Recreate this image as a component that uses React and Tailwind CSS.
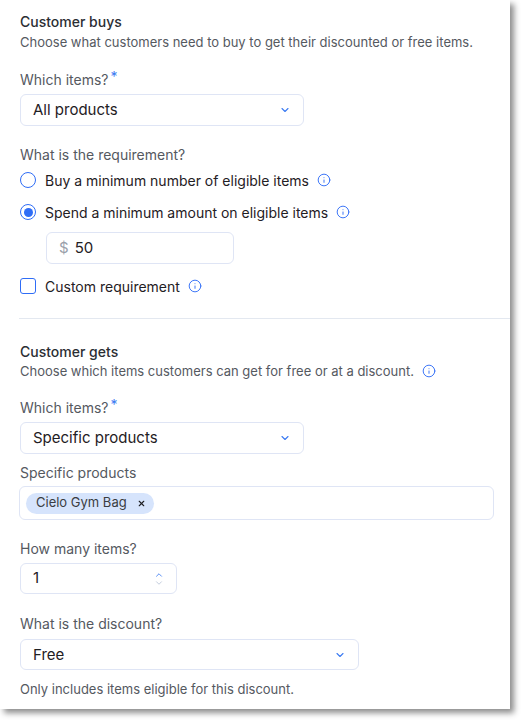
import { ChevronDown, ChevronUp, Info, X } from 'lucide-react';

function Select({ value, width, h = 'h-[32px]' }) {
  return (
    <div className={`flex items-center justify-between rounded-md border border-[#dfe5f5] bg-white pl-3 pr-3 ${h} ${width}`}>
      <span className="text-[15px] leading-[18px] text-[#1f2024]">{value}</span>
      <ChevronDown size={12} strokeWidth={2.2} className="text-[#3b7bf2]" />
    </div>
  );
}

function Label({ children, star }) {
  return (
    <div className="text-[14px] leading-[18px] text-[#55595f]">
      {children}
      {star && <span className="ml-0.5 align-top text-[14px] leading-[12px] text-[#3b7bf2]">*</span>}
    </div>
  );
}

function InfoIcon() {
  return <Info size={14} strokeWidth={1.6} className="text-[#2f6df6]" />;
}

export default function App() {
  return (
    <div className="h-[724px] w-[529px] bg-white" style={{ fontFamily: 'Inter, "Noto Sans", sans-serif' }}>
      <div className="h-[709px] w-[510px] bg-white pt-[13px] shadow-[4px_4px_6px_rgba(0,0,0,0.45)]">
        <div className="px-5">
          <div className="text-[14px] font-medium leading-[18px] text-[#2b2e33]">Customer buys</div>
          <div className="mt-[2px] text-[13px] leading-[18px] text-[#55595f]">
            Choose what customers need to buy to get their discounted or free items.
          </div>

          <div className="mt-[20px]"><Label star>Which items?</Label></div>
          <div className="mt-[5px]"><Select value="All products" width="w-[284px]" /></div>

          <div className="mt-[20px]"><Label>What is the requirement?</Label></div>
          <div className="mt-[7px] flex h-[18px] items-center">
            <span className="mr-[9px] h-[16px] w-[16px] rounded-full border-[1.5px] border-[#2f6df6]" />
            <span className="mr-2 text-[14px] text-[#1f2024]">Buy a minimum number of eligible items</span>
            <InfoIcon />
          </div>
          <div className="mt-[14px] flex h-[18px] items-center">
            <span className="mr-[9px] flex h-[16px] w-[16px] items-center justify-center rounded-full border-[1.5px] border-[#2f6df6]">
              <span className="h-[9px] w-[9px] rounded-full bg-[#2f6df6]" />
            </span>
            <span className="mr-2 text-[14px] text-[#1f2024]">Spend a minimum amount on eligible items</span>
            <InfoIcon />
          </div>
          <div className="ml-[26px] mt-[11px] flex h-[32px] w-[188px] items-center gap-1.5 rounded-md border border-[#dfe5f5] pl-3">
            <span className="text-[15px] text-[#9aa0aa]">$</span>
            <span className="text-[15px] text-[#1f2024]">50</span>
          </div>
          <div className="mt-[13px] flex h-[18px] items-center">
            <span className="mr-[9px] h-[16px] w-[16px] rounded-[3px] border-[1.5px] border-[#2f6df6]" />
            <span className="mr-2 text-[14px] text-[#1f2024]">Custom requirement</span>
            <InfoIcon />
          </div>
        </div>

        <div className="ml-[19px] mt-[23px] border-t border-[#e3e8f0]" />

        <div className="px-5">
          <div className="mt-[24px] text-[14px] font-medium leading-[18px] text-[#2b2e33]">Customer gets</div>
          <div className="mt-[1px] flex items-center gap-2 text-[13px] leading-[18px] text-[#55595f]">
            Choose which items customers can get for free or at a discount.
            <InfoIcon />
          </div>

          <div className="mt-[19px]"><Label star>Which items?</Label></div>
          <div className="mt-[5px]"><Select value="Specific products" width="w-[284px]" /></div>

          <div className="mt-[10px]"><Label>Specific products</Label></div>
          <div className="-ml-px mt-[4px] flex h-[34px] w-[475px] items-center rounded-md border border-[#dfe5f5] pl-[6px]">
            <span className="flex h-[21px] items-center gap-2.5 rounded-full bg-[#d6e4fc] pl-[10px] pr-[8px] text-[13px] text-[#3a3d42]">
              Cielo Gym Bag
              <X size={9} strokeWidth={3} className="text-[#1f2024]" />
            </span>
          </div>

          <div className="mt-[20px]"><Label>How many items?</Label></div>
          <div className="mt-[5px] flex h-[31px] w-[157px] items-center justify-between rounded-md border border-[#dfe5f5] pl-3 pr-3">
            <span className="text-[15px] text-[#1f2024]">1</span>
            <span className="flex flex-col items-center -space-y-0.5">
              <ChevronUp size={10} strokeWidth={2} className="text-[#3b7bf2]" />
              <ChevronDown size={10} strokeWidth={2} className="text-[#b8c3d6]" />
            </span>
          </div>

          <div className="mt-[21px]"><Label>What is the discount?</Label></div>
          <div className="mt-[6px]"><Select value="Free" width="w-[339px]" h="h-[31px]" /></div>
          <div className="mt-[10px] text-[13px] leading-[18px] text-[#55595f]">Only includes items eligible for this discount.</div>
        </div>
      </div>
    </div>
  );
}
